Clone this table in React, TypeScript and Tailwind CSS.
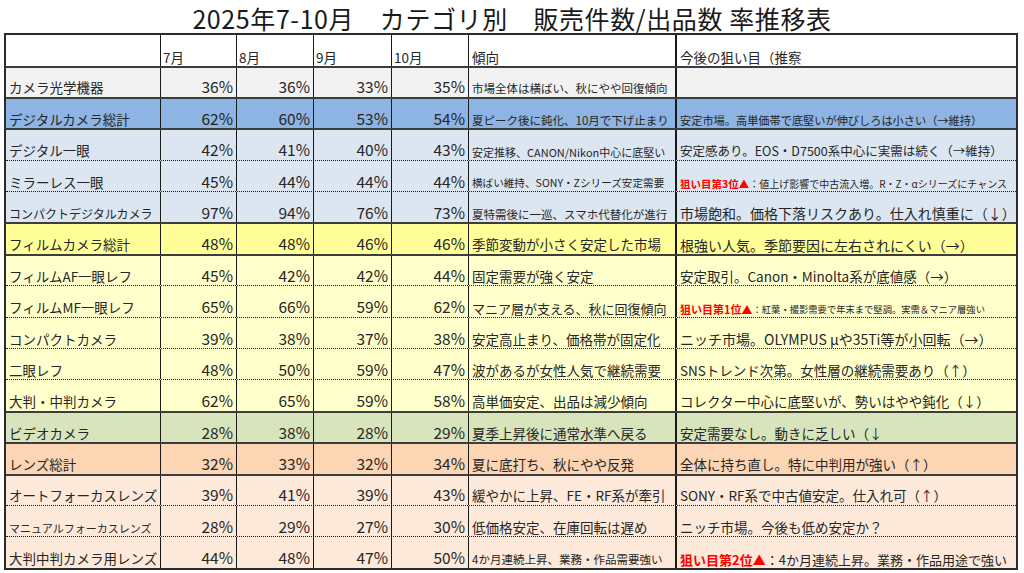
import React from "react";

type Row = {
  name: string;
  nameSize?: string;
  values: string[];
  trend: string;
  trendSize: string;
  hot?: string;
  outlook: string;
  outlookSize: string;
  hotSize?: string;
  bg: string;
  line: "solid" | "dotted";
};

const rows: Row[] = [
  { name: "カメラ光学機器", values: ["36%", "36%", "33%", "35%"], trend: "市場全体は横ばい、秋にやや回復傾向", trendSize: "text-[11.5px]", outlook: "", outlookSize: "text-[13.5px]", bg: "bg-[#f2f2f2]", line: "solid" },
  { name: "デジタルカメラ総計", values: ["62%", "60%", "53%", "54%"], trend: "夏ピーク後に鈍化、10月で下げ止まり", trendSize: "text-[11.5px]", outlook: "安定市場。高単価帯で底堅いが伸びしろは小さい（→維持）", outlookSize: "text-[11.2px]", bg: "bg-[#8db4e2]", line: "solid" },
  { name: "デジタル一眼", values: ["42%", "41%", "40%", "43%"], trend: "安定推移、CANON/Nikon中心に底堅い", trendSize: "text-[11px]", outlook: "安定感あり。EOS・D7500系中心に実需は続く（→維持）", outlookSize: "text-[12.5px]", bg: "bg-[#dce6f1]", line: "solid" },
  { name: "ミラーレス一眼", values: ["45%", "44%", "44%", "44%"], trend: "横ばい維持、SONY・Zシリーズ安定需要", trendSize: "text-[10.6px]", hot: "狙い目第3位▲", hotSize: "text-[10.5px]", outlook: "：値上げ影響で中古流入増。R・Z・αシリーズにチャンス", outlookSize: "text-[10px]", bg: "bg-[#dce6f1]", line: "dotted" },
  { name: "コンパクトデジタルカメラ", nameSize: "text-[12px]", values: ["97%", "94%", "76%", "73%"], trend: "夏特需後に一巡、スマホ代替化が進行", trendSize: "text-[11.5px]", outlook: "市場飽和。価格下落リスクあり。仕入れ慎重に（↓）", outlookSize: "text-[14px]", bg: "bg-[#dce6f1]", line: "dotted" },
  { name: "フィルムカメラ総計", values: ["48%", "48%", "46%", "46%"], trend: "季節変動が小さく安定した市場", trendSize: "text-[13.5px]", outlook: "根強い人気。季節要因に左右されにくい（→）", outlookSize: "text-[14px]", bg: "bg-[#ffff99]", line: "solid" },
  { name: "フィルムAF一眼レフ", values: ["45%", "42%", "42%", "44%"], trend: "固定需要が強く安定", trendSize: "text-[13.5px]", outlook: "安定取引。Canon・Minolta系が底値感（→）", outlookSize: "text-[13.5px]", bg: "bg-[#ffffcc]", line: "solid" },
  { name: "フィルムMF一眼レフ", values: ["65%", "66%", "59%", "62%"], trend: "マニア層が支える、秋に回復傾向", trendSize: "text-[13px]", hot: "狙い目第1位▲", hotSize: "text-[11px]", outlook: "：紅葉・撮影需要で年末まで堅調。実需＆マニア層強い", outlookSize: "text-[9.3px]", bg: "bg-[#ffffcc]", line: "dotted" },
  { name: "コンパクトカメラ", values: ["39%", "38%", "37%", "38%"], trend: "安定高止まり、価格帯が固定化", trendSize: "text-[13.5px]", outlook: "ニッチ市場。OLYMPUS μや35Ti等が小回転（→）", outlookSize: "text-[14px]", bg: "bg-[#ffffcc]", line: "dotted" },
  { name: "二眼レフ", values: ["48%", "50%", "59%", "47%"], trend: "波があるが女性人気で継続需要", trendSize: "text-[13.5px]", outlook: "SNSトレンド次第。女性層の継続需要あり（↑）", outlookSize: "text-[13.5px]", bg: "bg-[#ffffcc]", line: "dotted" },
  { name: "大判・中判カメラ", values: ["62%", "65%", "59%", "58%"], trend: "高単価安定、出品は減少傾向", trendSize: "text-[13.5px]", outlook: "コレクター中心に底堅いが、勢いはやや鈍化（↓）", outlookSize: "text-[13.5px]", bg: "bg-[#ffffcc]", line: "dotted" },
  { name: "ビデオカメラ", values: ["28%", "38%", "28%", "29%"], trend: "夏季上昇後に通常水準へ戻る", trendSize: "text-[13.5px]", outlook: "安定需要なし。動きに乏しい（↓", outlookSize: "text-[13.5px]", bg: "bg-[#d8e4bc]", line: "solid" },
  { name: "レンズ総計", values: ["32%", "33%", "32%", "34%"], trend: "夏に底打ち、秋にやや反発", trendSize: "text-[13.5px]", outlook: "全体に持ち直し。特に中判用が強い（↑）", outlookSize: "text-[13.5px]", bg: "bg-[#fcd5b4]", line: "solid" },
  { name: "オートフォーカスレンズ", values: ["39%", "41%", "39%", "43%"], trend: "緩やかに上昇、FE・RF系が牽引", trendSize: "text-[13.5px]", outlook: "SONY・RF系で中古値安定。仕入れ可（↑）", outlookSize: "text-[13.5px]", bg: "bg-[#fde9d9]", line: "solid" },
  { name: "マニュアルフォーカスレンズ", nameSize: "text-[11px]", values: ["28%", "29%", "27%", "30%"], trend: "低価格安定、在庫回転は遅め", trendSize: "text-[13.5px]", outlook: "ニッチ市場。今後も低め安定か？", outlookSize: "text-[13.5px]", bg: "bg-[#fde9d9]", line: "dotted" },
  { name: "大判中判カメラ用レンズ", values: ["44%", "48%", "47%", "50%"], trend: "4か月連続上昇、業務・作品需要強い", trendSize: "text-[11.5px]", hot: "狙い目第2位▲", hotSize: "text-[13px]", outlook: "：4か月連続上昇。業務・作品用途で強い", outlookSize: "text-[13px]", bg: "bg-[#fde9d9]", line: "dotted" },
];

const numW = ["w-[76px]", "w-[77px]", "w-[78px]", "w-[77px]"];

export default function App() {
  return (
    <div
      className="w-[1024px] h-[573px] bg-white text-[#262626] overflow-hidden"
      style={{ fontFamily: '"Noto Sans CJK JP", "Noto Sans", sans-serif' }}
    >
      {/* タイトル */}
      <div className="h-[33px] flex items-end justify-center pb-[2px]">
        <h1 className="text-[25px] leading-none font-normal tracking-[0.6px] text-[#1a1a1a]">
          2025年7-10月　カテゴリ別　販売件数/出品数 率推移表
        </h1>
      </div>

      <div className="ml-[4px] w-[1014px] border-2 border-[#2b2b2b]">
        {/* ヘッダー */}
        <div className="flex h-[30.5px] bg-white">
          <div className="w-[155px] border-r border-[#1a1a1a]" />
          {["7月", "8月", "9月", "10月"].map((m, i) => (
            <div key={m} className={`${numW[i]} border-r border-[#1a1a1a] flex items-end px-[2px] pb-[1px] text-[13.5px] leading-none`}>
              {m}
            </div>
          ))}
          <div className="w-[208px] border-r-2 border-[#1a1a1a] flex items-end px-[3px] pb-[1px] text-[13.5px] leading-none">傾向</div>
          <div className="flex-1 flex items-end px-[3px] pb-[1px] text-[13.5px] leading-none">今後の狙い目（推察</div>
        </div>

        {rows.map((r) => (
          <div
            key={r.name}
            className={`flex h-[31.4px] ${r.bg} ${
              r.line === "solid" ? "border-t-2 border-[#3d3d3d]" : "border-t border-dotted border-[#1a1a1a]"
            }`}
          >
            <div className={`w-[155px] border-r border-[#1a1a1a] flex items-end pl-[3px] pb-[2px] leading-none whitespace-nowrap ${r.nameSize ?? "text-[13.5px]"}`}>
              {r.name}
            </div>
            {r.values.map((v, i) => (
              <div key={i} className={`${numW[i]} border-r border-[#1a1a1a] flex items-end justify-end pr-[3px] pb-[2px] text-[15.5px] leading-none`}>
                {v}
              </div>
            ))}
            <div className={`w-[208px] border-r-2 border-[#1a1a1a] flex items-end pl-[3px] pb-[2px] leading-none whitespace-nowrap ${r.trendSize}`}>
              {r.trend}
            </div>
            <div className="flex-1 flex items-end pl-[3px] pb-[2px] leading-none whitespace-nowrap">
              {r.hot && <span className={`text-[#ff0000] font-bold ${r.hotSize}`}>{r.hot}</span>}
              <span className={r.outlookSize}>{r.outlook}</span>
            </div>
          </div>
        ))}
      </div>
    </div>
  );
}
